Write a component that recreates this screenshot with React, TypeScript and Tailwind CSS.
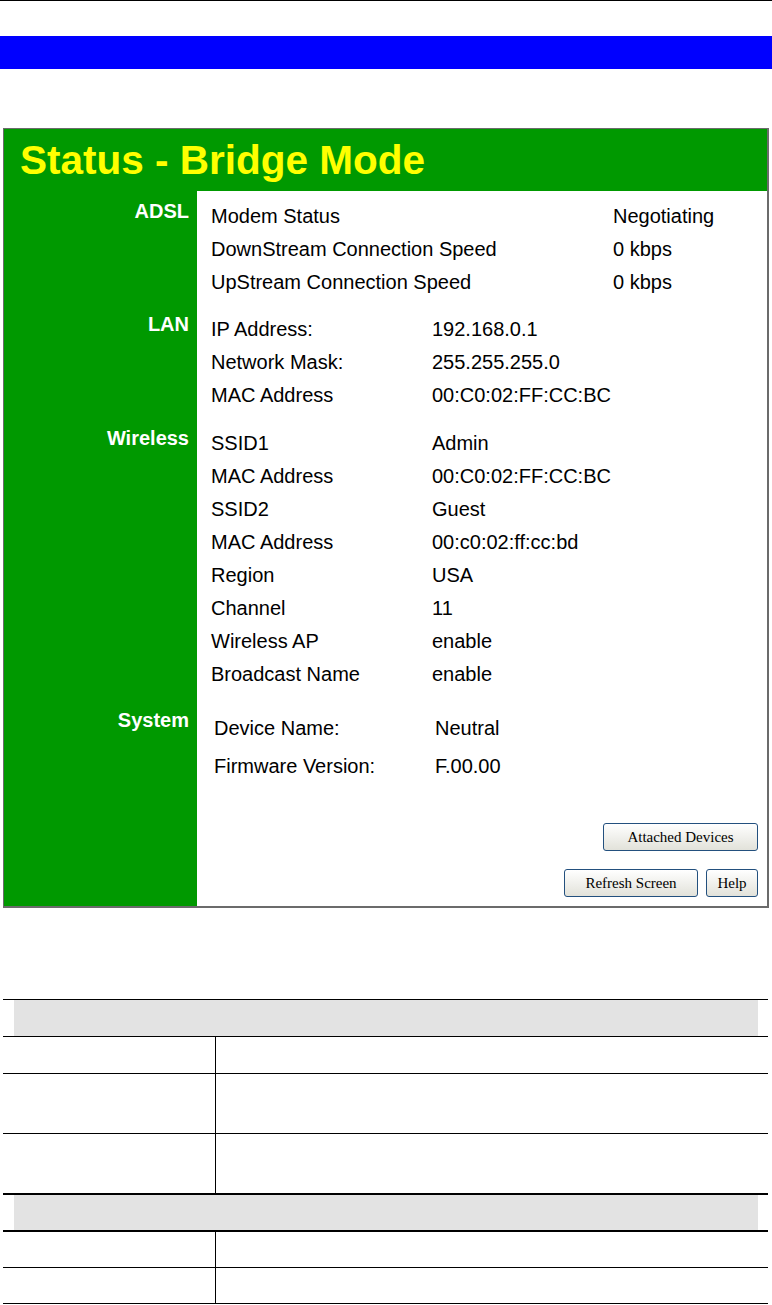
import React from "react";

type Row = [string, string];

const adsl: Row[] = [
  ["Modem Status", "Negotiating"],
  ["DownStream Connection Speed", "0 kbps"],
  ["UpStream Connection Speed", "0 kbps"],
];

const lan: Row[] = [
  ["IP Address:", "192.168.0.1"],
  ["Network Mask:", "255.255.255.0"],
  ["MAC Address", "00:C0:02:FF:CC:BC"],
];

const wireless: Row[] = [
  ["SSID1", "Admin"],
  ["MAC Address", "00:C0:02:FF:CC:BC"],
  ["SSID2", "Guest"],
  ["MAC Address", "00:c0:02:ff:cc:bd"],
  ["Region", "USA"],
  ["Channel", "11"],
  ["Wireless AP", "enable"],
  ["Broadcast Name", "enable"],
];

const systemRows: Row[] = [
  ["Device Name:", "Neutral"],
  ["Firmware Version:", "F.00.00"],
];

const Section = ({
  label,
  rows,
  pad,
  labelWidth,
  indent,
  rowHeight,
}: {
  label: string;
  rows: Row[];
  pad: string;
  labelWidth: string;
  indent: string;
  rowHeight: string;
}) => (
  <div className="flex">
    <div className={`w-[193px] shrink-0 pr-[8px] text-right text-[20px] font-bold leading-[22px] text-white ${pad}`}>
      {label}
    </div>
    <div className={`flex-1 bg-white ${pad} ${indent}`}>
      {rows.map(([k, v], i) => (
        <div key={i} className={`flex text-[20px] text-black ${rowHeight}`}>
          <span className={`shrink-0 ${labelWidth}`}>{k}</span>
          <span>{v}</span>
        </div>
      ))}
    </div>
  </div>
);

const XpButton = ({ text, width }: { text: string; width: string }) => (
  <button
    className={`h-[28px] ${width} rounded-[3px] border border-[#23507e] bg-linear-to-b from-white to-[#e2e2da] font-['Liberation_Serif',serif] text-[15px] leading-none text-black`}
  >
    {text}
  </button>
);

const StatusPanel = () => (
  <div className="ml-[3px] mt-[59px] flex h-[780px] w-[766px] flex-col border-t border-b-2 border-l border-r-2 border-[#6b6b6b] bg-[#009900]">
    <div className="flex h-[62px] shrink-0 items-center pl-[16px] text-[40.5px] font-bold text-[#ffff00]">
      Status - Bridge Mode
    </div>
    <div className="flex flex-1 flex-col">
      <Section label="ADSL" rows={adsl} pad="pt-[9px]" labelWidth="w-[402px]" indent="pl-[14px]" rowHeight="h-[33px] leading-[33px]" />
      <Section label="LAN" rows={lan} pad="pt-[14px]" labelWidth="w-[221px]" indent="pl-[14px]" rowHeight="h-[33px] leading-[33px]" />
      <Section label="Wireless" rows={wireless} pad="pt-[15px]" labelWidth="w-[221px]" indent="pl-[14px]" rowHeight="h-[33px] leading-[33px]" />
      <Section label="System" rows={systemRows} pad="pt-[18px]" labelWidth="w-[221px]" indent="pl-[17px]" rowHeight="h-[38px] leading-[38px]" />
      <div className="flex flex-1">
        <div className="w-[193px] shrink-0" />
        <div className="flex flex-1 flex-col items-end justify-end gap-[18px] bg-white pb-[9px] pr-[9px]">
          <XpButton text="Attached Devices" width="w-[155px]" />
          <div className="flex gap-[8px]">
            <XpButton text="Refresh Screen" width="w-[134px]" />
            <XpButton text="Help" width="w-[52px]" />
          </div>
        </div>
      </div>
    </div>
  </div>
);

const TableRow = ({ h, border }: { h: string; border: string }) => (
  <div className={`flex ${h} ${border} border-black`}>
    <div className="w-[213px] border-r border-black" />
    <div className="flex-1" />
  </div>
);

const HeaderRow = ({ h, border }: { h: string; border: string }) => (
  <div className={`${h} ${border} border-black pl-[11px] pr-[10px]`}>
    <div className="h-full bg-[#e3e3e3]" />
  </div>
);

const DescTable = () => (
  <div className="ml-[3px] mt-[91px] w-[765px] border-t border-black">
    <HeaderRow h="h-[37px]" border="border-b" />
    <TableRow h="h-[37px]" border="border-b" />
    <TableRow h="h-[60px]" border="border-b" />
    <TableRow h="h-[61px]" border="border-b-2" />
    <HeaderRow h="h-[37px]" border="border-b-2" />
    <TableRow h="h-[36px]" border="border-b" />
    <TableRow h="h-[36px]" border="border-b" />
  </div>
);

export default function App() {
  return (
    <div className="h-[1305px] w-[772px] overflow-hidden bg-white font-['Liberation_Sans',Arial,sans-serif]">
      <div className="h-px bg-black" />
      <div className="mt-[35px] h-[33px] bg-[#0000ff]" />
      <StatusPanel />
      <DescTable />
    </div>
  );
}
